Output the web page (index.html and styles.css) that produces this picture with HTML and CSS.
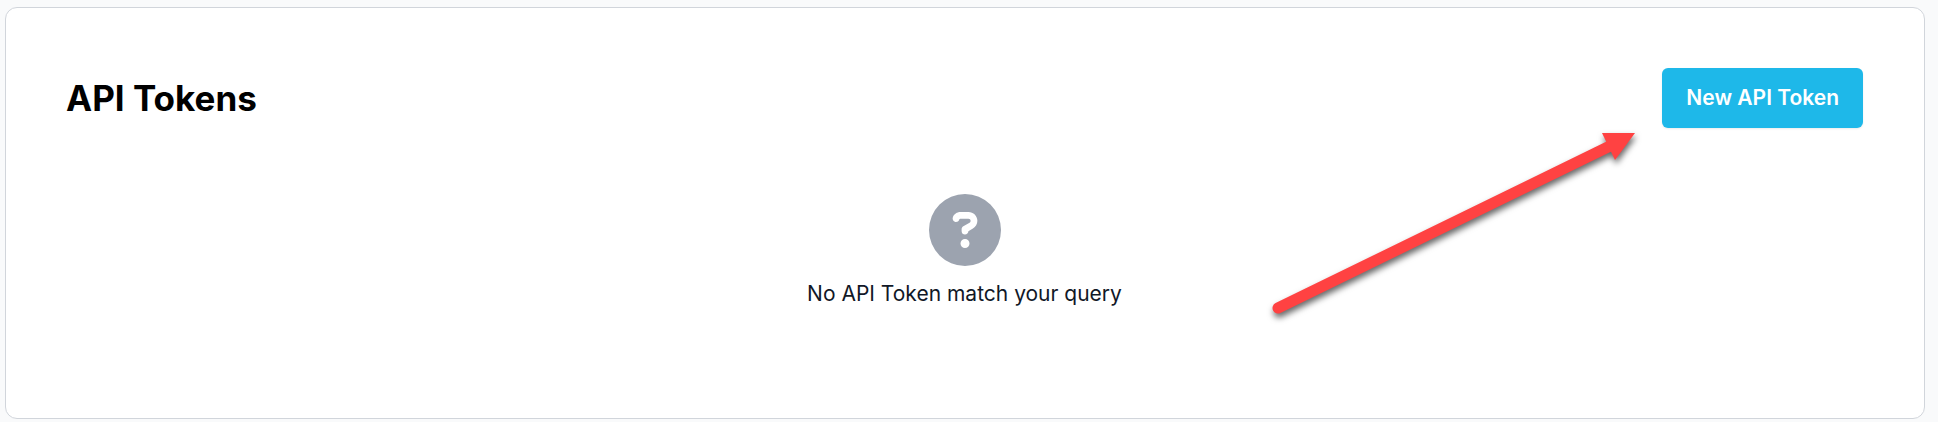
FILE: index.html
```html
<!DOCTYPE html>
<html lang="en">
<head>
<meta charset="utf-8">
<meta name="viewport" content="width=device-width, initial-scale=1">
<title>API Tokens</title>
<link rel="stylesheet" href="styles.css">
</head>
<body>
<main class="card">
  <header class="card-header">
    <h1 class="title">API Tokens</h1>
    <button class="button" type="button">New API Token</button>
  </header>
  <section class="empty">
    <svg class="empty-icon" viewBox="0 0 512 512" aria-hidden="true">
      <path fill="currentColor" fill-rule="evenodd" d="M256 512A256 256 0 1 0 256 0a256 256 0 1 0 0 512zM169.8 165.3c7.9-22.3 29.1-37.3 52.8-37.3h58.3c34.9 0 63.1 28.3 63.1 63.1c0 22.6-12.1 43.5-31.7 54.8L280 264.4c-.2 13-10.9 23.6-24 23.6c-13.3 0-24-10.7-24-24V250.5c0-8.6 4.6-16.5 12.1-20.8l44.3-25.4c4.7-2.7 7.6-7.7 7.6-13.1c0-8.4-6.8-15.1-15.1-15.1H222.6c-3.4 0-6.4 2.1-7.5 5.3l-.4 1.2c-4.4 12.5-18.2 19-30.6 14.6s-19-18.2-14.6-30.6l.4-1.2zM288 352a32 32 0 1 1-64 0 32 32 0 1 1 64 0z"/>
    </svg>
    <p class="empty-text">No API Token match your query</p>
  </section>
  <svg class="arrow" viewBox="0 0 380 200" aria-hidden="true">
    <path d="M18 182L350 20" fill="none" stroke="currentColor" stroke-width="11" stroke-linecap="round"/>
    <path d="M342 7H375L355 34Z" fill="currentColor"/>
  </svg>
</main>
</body>
</html>
```
FILE: styles.css
```css
* {
  box-sizing: border-box;
}

body {
  margin: 0;
  padding: 7px 13px 3px 5px;
  background: #f9fafb;
  color: #111827;
  font-family: Inter, "Liberation Sans", sans-serif;
}

.card {
  position: relative;
  padding: 60px 61px 108px 60px;
  border: 1px solid #d1d5db;
  border-radius: 12px;
  background: #fff;
}

.card-header {
  display: flex;
  align-items: center;
  justify-content: space-between;
}

.title {
  margin: 0;
  color: #000;
  font-size: 35px;
  font-weight: 700;
  line-height: 44px;
}

.button {
  padding: 16px 24px;
  border: 0;
  border-radius: 6px;
  background: #1eb8e9;
  box-shadow: 0 1px 2px rgba(0, 0, 0, 0.08);
  color: #fff;
  font: 600 21px/28px Inter, "Liberation Sans", sans-serif;
}

.empty {
  display: flex;
  flex-direction: column;
  align-items: center;
  gap: 12px;
  padding-top: 66px;
}

.empty-icon {
  width: 72px;
  height: 72px;
  color: #9ca3af;
}

.empty-text {
  margin: 0;
  font-size: 21px;
  line-height: 32px;
}

.arrow {
  position: absolute;
  top: 118px;
  right: 284px;
  width: 380px;
  height: 200px;
  overflow: visible;
  color: #ff4242;
  filter: drop-shadow(1px 4px 3px rgba(0, 0, 0, 0.6));
  pointer-events: none;
}
```
